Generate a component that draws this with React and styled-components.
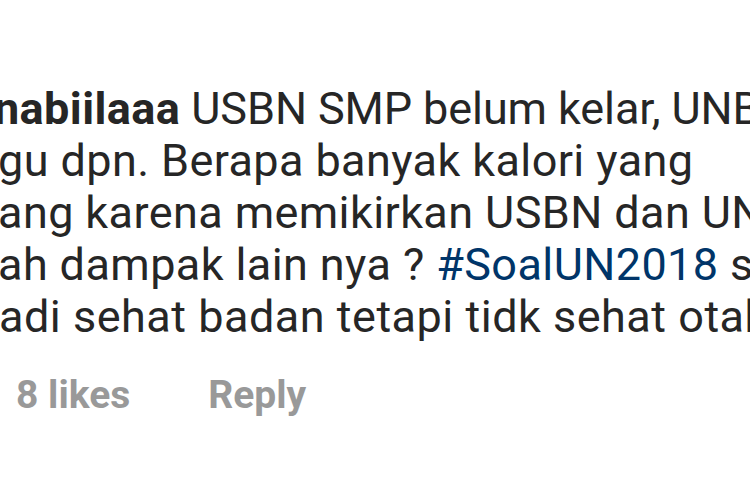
import React from 'react';
import styled, { createGlobalStyle } from 'styled-components';

const GlobalStyle = createGlobalStyle`
  html, body {
    margin: 0;
    padding: 0;
    background: #fff;
  }
`;

const Frame = styled.div`
  width: 750px;
  height: 500px;
  overflow: hidden;
  background: #fff;
  font-family: Roboto, 'Noto Sans', sans-serif;
`;

const Comment = styled.div`
  display: flex;
  flex-direction: column;
  padding-top: 83px;
`;

const Line = styled.div`
  white-space: nowrap;
  font-size: 45px;
  line-height: 52px;
  letter-spacing: ${(p) => p.$track ?? 0.4}px;
  color: #262626;
  margin-left: ${(p) => p.$shift || 0}px;
`;

const User = styled.span`
  font-weight: 700;
  letter-spacing: 0.4px;
`;

const Tag = styled.span`
  color: #003569;
`;

const Meta = styled.div`
  display: flex;
  gap: 78px;
  margin-top: 29px;
  padding-left: 16px;
  font-size: 39px;
  font-weight: 700;
  color: #999;
`;

const App = () => {
  return (
    <Frame>
      <GlobalStyle />
      <Comment>
        <Line $shift={-6} $track={-0.1}>
          <User>nabiilaaa</User> USBN SMP belum kelar, UNBK
        </Line>
        <Line $shift={-2}>gu dpn. Berapa banyak kalori yang</Line>
        <Line $shift={-2}>ang karena memikirkan USBN dan UNBK</Line>
        <Line $shift={-2}>
          ah dampak lain nya ? <Tag>#SoalUN2018</Tag> semoga
        </Line>
        <Line $shift={-1} $track={0.5}>
          adi sehat badan tetapi tidk sehat otak
        </Line>
      </Comment>
      <Meta>
        <span>8 likes</span>
        <span>Reply</span>
      </Meta>
    </Frame>
  );
};

export default App;
